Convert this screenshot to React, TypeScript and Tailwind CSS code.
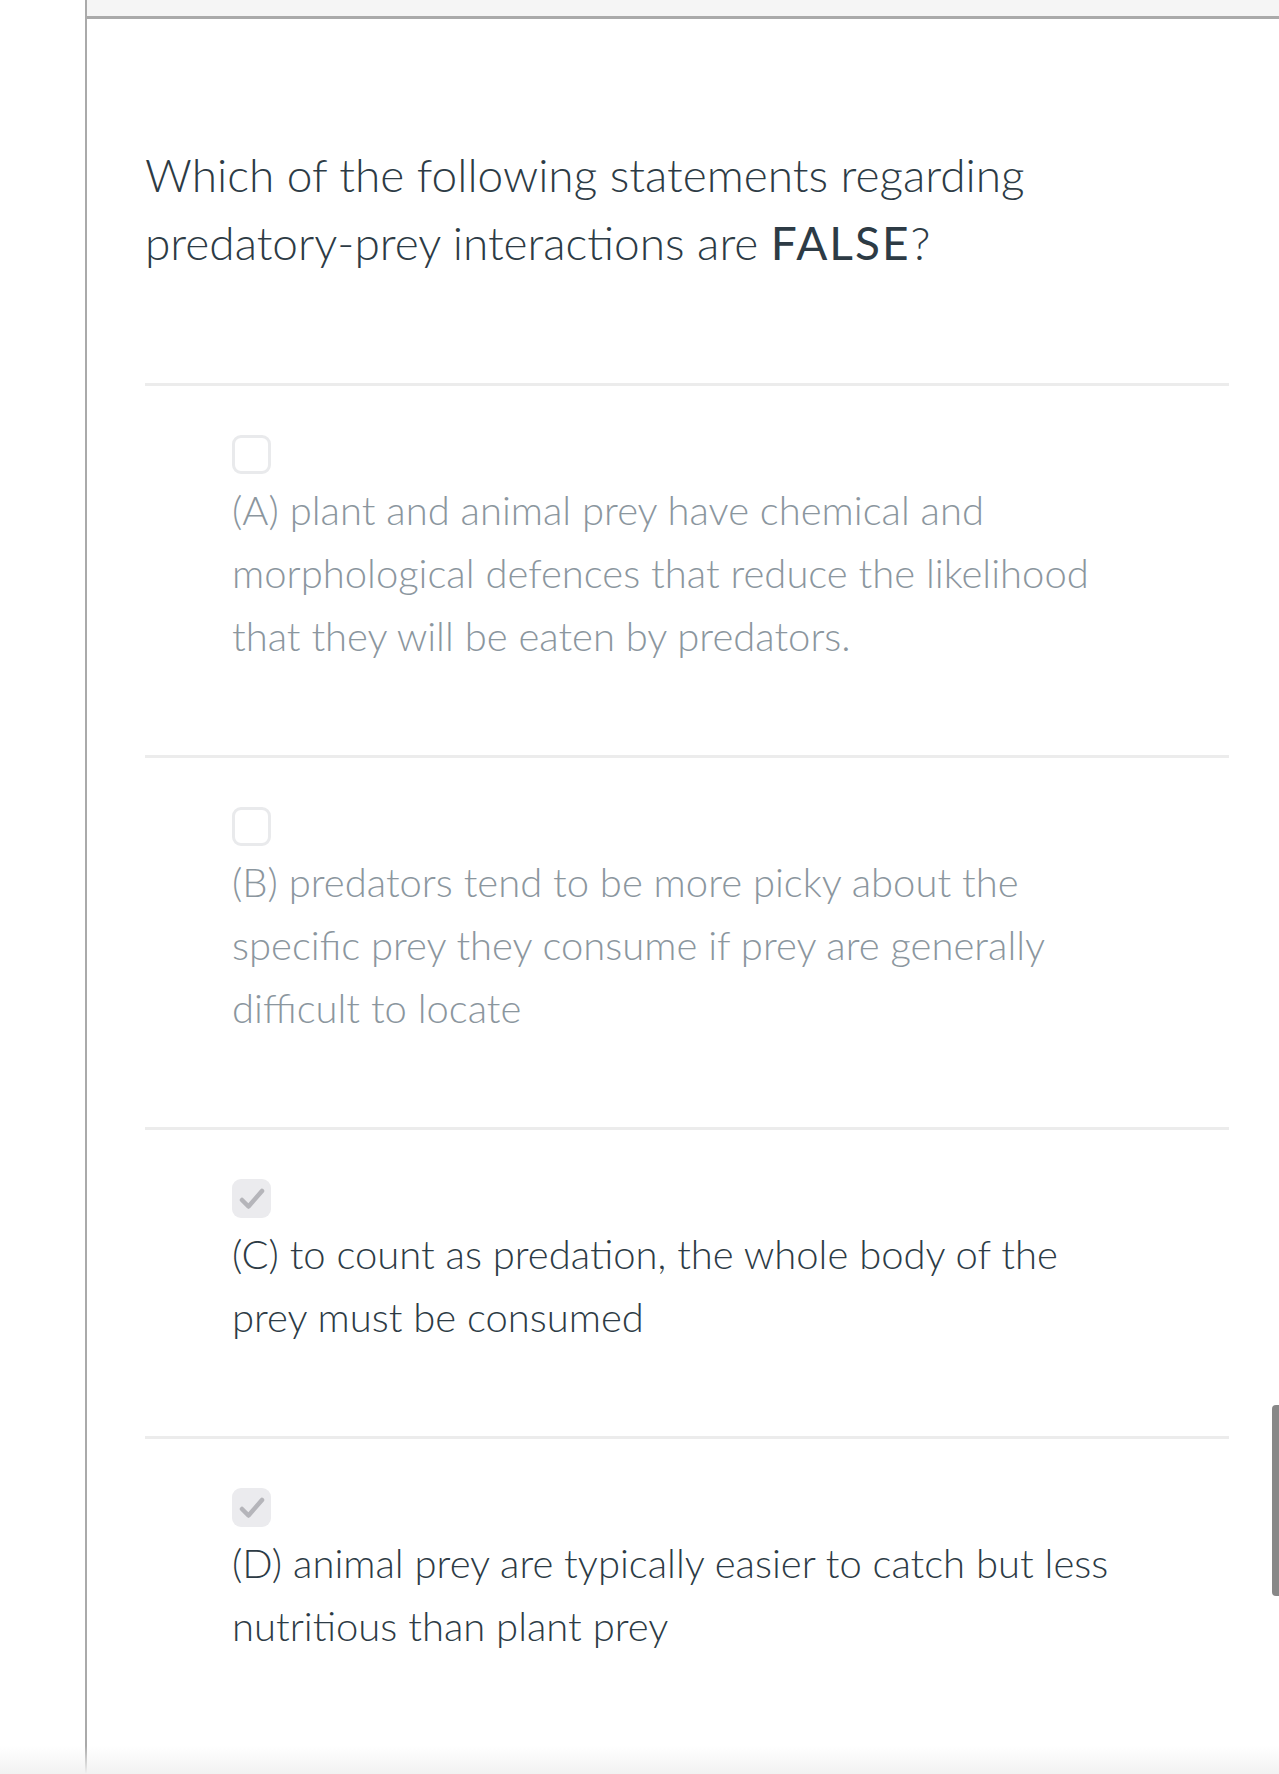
import React from "react";

type Answer = {
  id: string;
  text: string;
  checked: boolean;
};

const answers: Answer[] = [
  {
    id: "A",
    text: "(A) plant and animal prey have chemical and morphological defences that reduce the likelihood that they will be eaten by predators.",
    checked: false,
  },
  {
    id: "B",
    text: "(B) predators tend to be more picky about the specific prey they consume if prey are generally difficult to locate",
    checked: false,
  },
  {
    id: "C",
    text: "(C) to count as predation, the whole body of the prey must be consumed",
    checked: true,
  },
  {
    id: "D",
    text: "(D) animal prey are typically easier to catch but less nutritious than plant prey",
    checked: true,
  },
];

const Checkbox = ({ checked }: { checked: boolean }) =>
  checked ? (
    <div className="flex h-[39px] w-[39px] items-center justify-center rounded-[9px] bg-[#ebebee]">
      <svg width="28" height="24" viewBox="0 0 28 24" fill="none">
        <path
          d="M4 13 L10.5 19.5 L24 4"
          stroke="#b5b5ba"
          strokeWidth="4.5"
          strokeLinecap="round"
          strokeLinejoin="round"
        />
      </svg>
    </div>
  ) : (
    <div className="h-[39px] w-[39px] rounded-[9px] border-[3px] border-[#e9eaec] bg-white" />
  );

const AnswerRow = ({ text, checked }: Answer) => (
  <div className="border-t-[3px] border-[#ececec] pb-[87px] pl-[87px] pr-[100px] pt-[49px]">
    <Checkbox checked={checked} />
    <p
      className={`mt-[5px] text-[40px] font-light leading-[63px] ${
        checked ? "text-[#2d3b45]" : "text-[#8b969e]"
      }`}
    >
      {text}
    </p>
  </div>
);

export default function App() {
  return (
    <div
      className="relative flex h-[1774px] w-full overflow-hidden bg-white"
      style={{ fontFamily: "Lato, 'Open Sans', sans-serif" }}
    >
      <div className="w-[85px] shrink-0" />
      <div className="flex min-w-0 flex-1 flex-col border-l-2 border-[#aaaaaa]">
        <div className="h-[19px] shrink-0 border-b-[3px] border-[#aaaaaa] bg-[#f5f5f5]" />
        <div className="pl-[58px] pr-[50px] pt-[122px]">
          <h1 className="pb-[106px] pr-[60px] text-[46px] font-light leading-[68px] text-[#2d3b45]">
            Which of the following statements regarding predatory-prey interactions are{" "}
            <span className="font-normal tracking-[2px]">FALSE</span>?
          </h1>
          {answers.map((a) => (
            <AnswerRow key={a.id} {...a} />
          ))}
        </div>
      </div>
      <div className="absolute right-0 top-[1405px] h-[191px] w-[7px] rounded-l-[4px] bg-[#888888]" />
      <div className="absolute bottom-0 left-0 h-[28px] w-full bg-gradient-to-b from-transparent to-[#f2f2f2]" />
    </div>
  );
}
